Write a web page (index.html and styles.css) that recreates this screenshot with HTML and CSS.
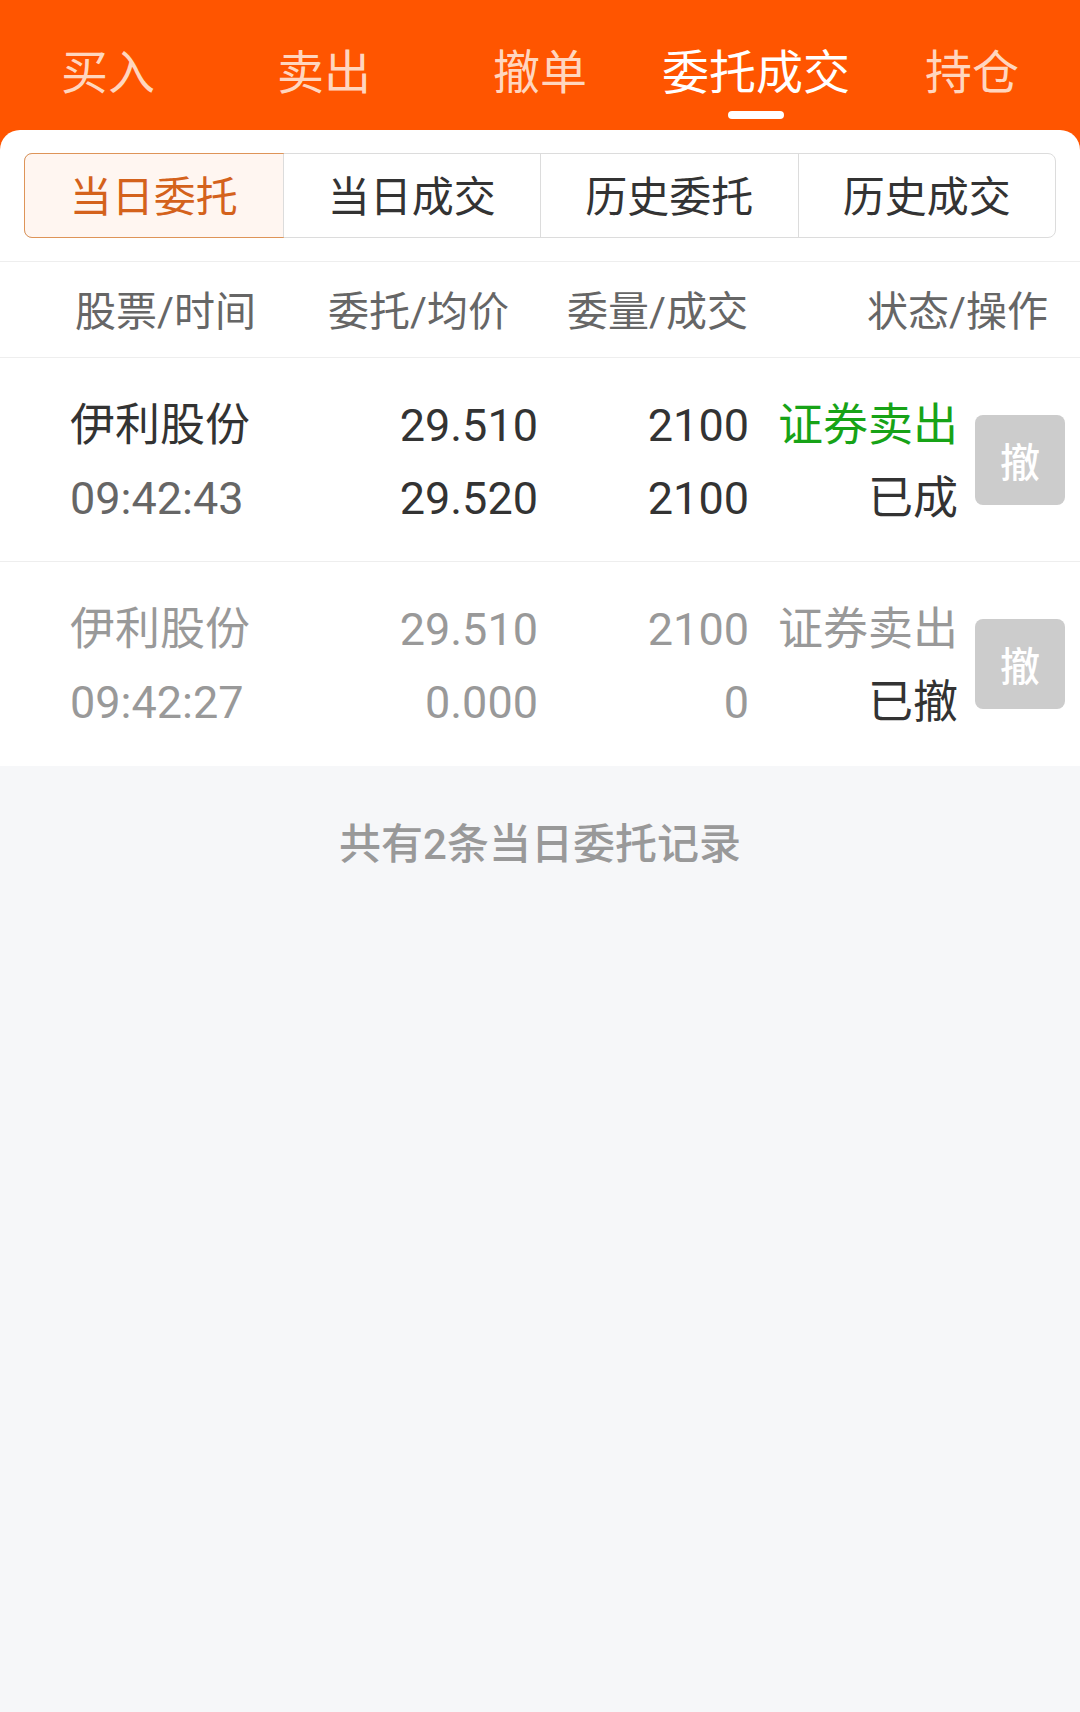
FILE: index.html
```html
<!DOCTYPE html>
<html lang="zh-CN">
<head>
  <meta charset="UTF-8" />
  <meta name="viewport" content="width=device-width, initial-scale=1.0"/>
  <title>委托成交</title>
  <link rel="stylesheet" href="styles.css">
</head>
<body>
  <div class="page">
    <div class="topbar">
      <div class="tab"><span>买入</span></div>
      <div class="tab"><span>卖出</span></div>
      <div class="tab"><span>撤单</span></div>
      <div class="tab ativo"><span>委托成交</span><i class="barra"></i></div>
      <div class="tab"><span>持仓</span></div>
    </div>

    <div class="card">
      <div class="seg-wrap">
        <div class="seg">
          <div class="seg-item ativo">当日委托</div>
          <div class="seg-item">当日成交</div>
          <div class="seg-item">历史委托</div>
          <div class="seg-item">历史成交</div>
        </div>
      </div>

      <div class="cabecalho">
        <div>股票/时间</div>
        <div>委托/均价</div>
        <div>委量/成交</div>
        <div class="dir">状态/操作</div>
      </div>

      <div class="linha">
        <div class="col nome">
          <div class="escuro">伊利股份</div>
          <div class="medio">09:42:43</div>
        </div>
        <div class="col num">
          <div class="escuro">29.510</div>
          <div class="escuro">29.520</div>
        </div>
        <div class="col num">
          <div class="escuro">2100</div>
          <div class="escuro">2100</div>
        </div>
        <div class="col num">
          <div class="verde">证券卖出</div>
          <div class="escuro">已成</div>
        </div>
        <button class="btn-cancel">撤</button>
      </div>

      <div class="linha">
        <div class="col nome">
          <div class="claro">伊利股份</div>
          <div class="claro">09:42:27</div>
        </div>
        <div class="col num">
          <div class="claro">29.510</div>
          <div class="claro">0.000</div>
        </div>
        <div class="col num">
          <div class="claro">2100</div>
          <div class="claro">0</div>
        </div>
        <div class="col num">
          <div class="claro">证券卖出</div>
          <div class="escuro">已撤</div>
        </div>
        <button class="btn-cancel">撤</button>
      </div>
    </div>

    <div class="rodape">共有2条当日委托记录</div>
  </div>
</body>
</html>
```

FILE: styles.css
```css
body {
  margin: 0;
  font-family: Roboto, "Noto Sans CJK SC", sans-serif;
  background: #f6f7f9;
  color: #333;
}

.page {
  min-height: 1712px;
  background: linear-gradient(to bottom, #ff5500 150px, #f6f7f9 150px);
}

.topbar {
  display: grid;
  grid-template-columns: repeat(5, 1fr);
  height: 130px;
}

.tab {
  display: flex;
  flex-direction: column;
  align-items: center;
  padding-top: 40px;
  font-size: 47px;
  line-height: 66px;
  color: #ffd6bf;
}

.tab.ativo {
  color: #fff;
}

.barra {
  display: block;
  width: 56px;
  height: 8px;
  margin-top: 5px;
  border-radius: 4px;
  background: #fff;
}

.card {
  background: #fff;
  border-radius: 20px 20px 0 0;
}

.seg-wrap {
  padding: 23px 24px 23px;
  border-bottom: 1px solid #eeeeee;
}

.seg {
  display: grid;
  grid-template-columns: repeat(4, 1fr);
  height: 85px;
  border: 1px solid #dcdcdc;
  border-radius: 8px;
  box-sizing: border-box;
}

.seg-item {
  display: flex;
  align-items: center;
  justify-content: center;
  padding-bottom: 4px;
  font-size: 42px;
  color: #333;
  border-left: 1px solid #dcdcdc;
}

.seg-item:first-child {
  border-left: none;
}

.seg-item.ativo {
  background: #fff6f1;
  color: #d4621c;
  outline: 1px solid #de9458;
  border-radius: 7px 0 0 7px;
}

.cabecalho {
  display: grid;
  grid-template-columns: 253px 239px 1fr auto;
  align-items: center;
  height: 96px;
  padding: 0 32px 4px 75px;
  box-sizing: border-box;
  font-size: 41px;
  color: #666;
  border-bottom: 1px solid #eeeeee;
}

.linha {
  display: grid;
  grid-template-columns: 230px 238px 211px 209px 107px;
  align-items: center;
  height: 204px;
  padding: 4px 15px 0 70px;
  box-sizing: border-box;
  border-bottom: 1px solid #eeeeee;
  font-size: 45px;
  line-height: 73px;
}

.linha:last-of-type {
  border-bottom: none;
}

.num {
  text-align: right;
}

.btn-cancel {
  justify-self: end;
  width: 90px;
  height: 90px;
  margin-top: -4px;
  border: none;
  border-radius: 8px;
  background: #cccccc;
  color: #fff;
  font-family: inherit;
  font-size: 40px;
  font-weight: 500;
  padding: 0;
}

.escuro { color: #333; }
.medio { color: #666; }
.claro { color: #999; }
.verde { color: #17a317; }

.rodape {
  padding-top: 49px;
  text-align: center;
  font-size: 42px;
  line-height: 60px;
  font-weight: 500;
  color: #999;
}
```
